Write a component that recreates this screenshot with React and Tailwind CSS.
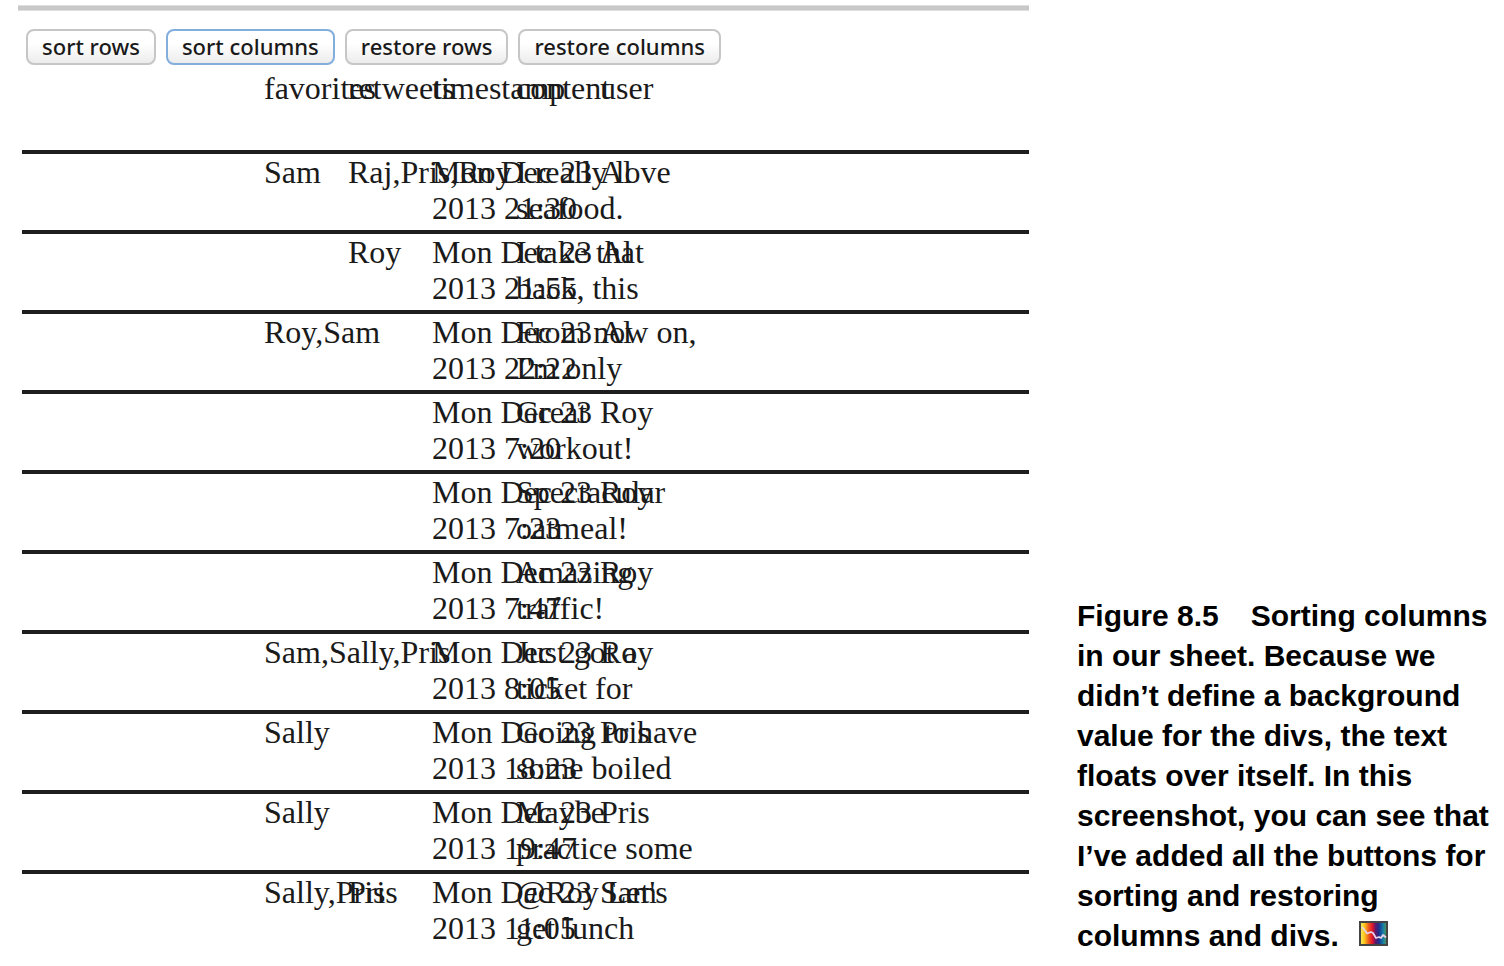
const columns = ["favorites", "retweets", "timestamp", "content", "user"];

const tweets = [
  ["Sam", "Raj,Pris,Roy", "Mon Dec 23\n2013 21:30", "I really love\nseafood.", "Al"],
  ["", "Roy", "Mon Dec 23\n2013 21:55", "I take that\nback, this", "Al"],
  ["Roy,Sam", "", "Mon Dec 23\n2013 22:22", "From now on,\nI'm only", "Al"],
  ["", "", "Mon Dec 23\n2013 7:20", "Great\nworkout!", "Roy"],
  ["", "", "Mon Dec 23\n2013 7:23", "Spectacular\noatmeal!", "Roy"],
  ["", "", "Mon Dec 23\n2013 7:47", "Amazing\ntraffic!", "Roy"],
  ["Sam,Sally,Pris", "", "Mon Dec 23\n2013 8:05", "Just got a\nticket for", "Roy"],
  ["Sally", "", "Mon Dec 23\n2013 18:23", "Going to have\nsome boiled", "Pris"],
  ["Sally", "", "Mon Dec 23\n2013 19:47", "Maybe\npractice some", "Pris"],
  ["Sally,Pris", "Pris", "Mon Dec 23\n2013 11:05", "@Roy Let's\nget lunch", "Sam"],
];

const captionLines = [
  "in our sheet. Because we",
  "didn’t define a background",
  "value for the divs, the text",
  "floats over itself. In this",
  "screenshot, you can see that",
  "I’ve added all the buttons for",
  "sorting and restoring",
];

function SheetButton({ children, active }) {
  return (
    <button
      type="button"
      className={
        "h-9 whitespace-nowrap rounded-lg border-2 bg-linear-to-b from-white from-40% to-[#ececec] px-3.5 pb-0.5 font-['Noto_Sans',sans-serif] text-[22px] font-medium leading-[30px] text-[#1a1a1a] " +
        (active ? "border-[#82aede]" : "border-[#c6c6c6]")
      }
    >
      {children}
    </button>
  );
}

function Sheet() {
  return (
    <table className="w-full table-fixed border-separate border-spacing-0 font-['Liberation_Serif',serif] text-[32px] leading-9 text-[#1a1a1a]">
      <colgroup>
        <col className="w-[326px]" />
        <col className="w-[84px]" />
        <col className="w-[84px]" />
        <col className="w-[84px]" />
        <col />
      </colgroup>
      <thead>
        <tr>
          {columns.map((name) => (
            <th
              key={name}
              scope="col"
              className="h-20 whitespace-pre p-0 text-left align-top font-normal first:pl-[242px]"
            >
              {name}
            </th>
          ))}
        </tr>
      </thead>
      <tbody>
        {tweets.map((row, r) => (
          <tr key={r}>
            {row.map((value, c) => (
              <td
                key={c}
                className="h-20 whitespace-pre border-t-4 border-[#1e1e1e] p-0 align-top first:pl-[242px]"
              >
                {value}
              </td>
            ))}
          </tr>
        ))}
      </tbody>
    </table>
  );
}

function SpectrumIcon() {
  return (
    <svg
      viewBox="0 0 29 25"
      className="ml-5 inline-block h-[25px] w-[29px] align-baseline"
      aria-hidden="true"
    >
      <defs>
        <linearGradient id="spectrum" x1="0" x2="1" y1="0" y2="0">
          <stop offset="0" stopColor="#f6f06a" />
          <stop offset="0.16" stopColor="#fbc81c" />
          <stop offset="0.32" stopColor="#ee5a1c" />
          <stop offset="0.46" stopColor="#e0142c" />
          <stop offset="0.58" stopColor="#5b1a6c" />
          <stop offset="0.7" stopColor="#1c2f8c" />
          <stop offset="0.86" stopColor="#1580a8" />
          <stop offset="1" stopColor="#5c9a4a" />
        </linearGradient>
      </defs>
      <rect x="1" y="1" width="27" height="23" fill="url(#spectrum)" stroke="#444" strokeWidth="2" />
      <path
        d="M3 6L6 9.500L8 12.500L12 11L14 12L17 17L20 16L22 17L24 14L27 16.500"
        fill="none"
        stroke="#e6d3e8"
        strokeWidth="1.800"
        strokeLinejoin="round"
      />
    </svg>
  );
}

export default function App() {
  return (
    <figure className="flex items-end bg-white">
      <div className="min-w-0 flex-1 pb-4 pl-[18px] pt-[5px]">
        <div className="h-1.5 border-y border-[#dedede] bg-[#c8c8c8]" />
        <div className="pl-1">
          <div className="flex gap-2.5 pb-[5px] pl-1 pt-[18px]">
            <SheetButton>sort rows</SheetButton>
            <SheetButton active>sort columns</SheetButton>
            <SheetButton>restore rows</SheetButton>
            <SheetButton>restore columns</SheetButton>
          </div>
          <Sheet />
        </div>
      </div>
      <figcaption className="w-[475px] shrink-0 whitespace-nowrap pb-[10px] pl-12 font-['Liberation_Sans',Arial,sans-serif] text-[30px] font-black leading-10 text-black">
        <span className="mr-8">Figure 8.5</span>
        Sorting columns
        <br />
        {captionLines.map((line) => (
          <span key={line} className="block">
            {line}
          </span>
        ))}
        columns and divs.
        <SpectrumIcon />
      </figcaption>
    </figure>
  );
}
